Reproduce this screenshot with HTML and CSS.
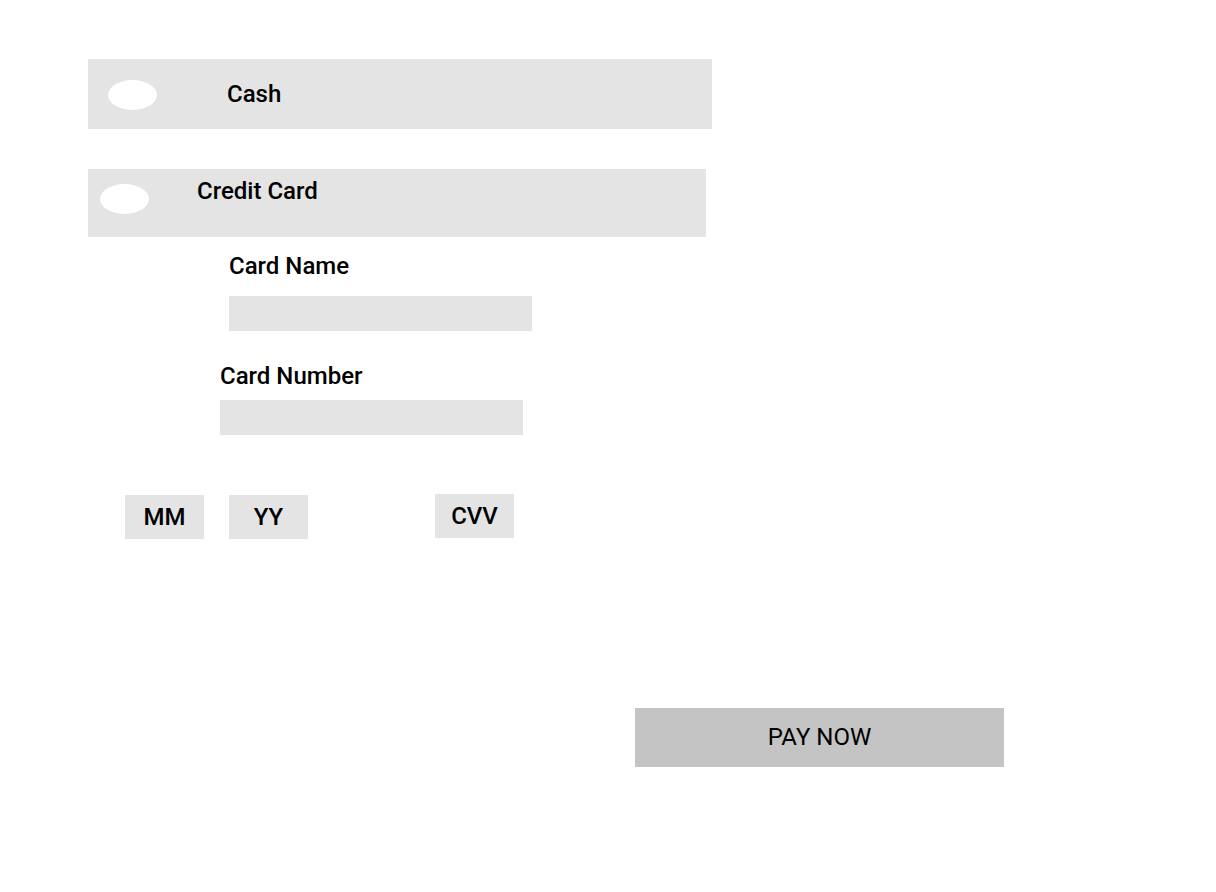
FILE: index.html
```html
<!DOCTYPE html>
<html lang="en">
<head>
<meta charset="utf-8">
<title>Payment</title>
<link rel="stylesheet" href="styles.css">
</head>
<body>
<main class="page">
  <div class="option option-cash">
    <span class="radio"></span>
    <span class="option-label">Cash</span>
  </div>
  <div class="option option-credit">
    <span class="radio"></span>
    <span class="option-label">Credit Card</span>
  </div>
  <div class="field field-name">
    <label class="field-label">Card Name</label>
    <div class="input"></div>
  </div>
  <div class="field field-number">
    <label class="field-label">Card Number</label>
    <div class="input"></div>
  </div>
  <div class="exp-row">
    <div class="small-box box-mm">MM</div>
    <div class="small-box box-yy">YY</div>
    <div class="small-box box-cvv">CVV</div>
  </div>
  <div class="pay-row">
    <button class="pay-btn">PAY NOW</button>
  </div>
</main>
</body>
</html>
```

FILE: styles.css
```css
* { box-sizing: border-box; }
html, body { margin: 0; padding: 0; background: #ffffff; }
body {
  font-family: Roboto, "Liberation Sans", Arial, sans-serif;
  font-size: 24px;
  font-weight: 500;
  color: #000;
}
.page {
  padding-top: 59px;
  width: 1216px;
  height: 892px;
}
.option {
  display: flex;
  background: #e4e4e4;
  margin-left: 88px;
}
.radio {
  display: block;
  width: 49px;
  height: 30px;
  border-radius: 50%;
  background: #ffffff;
  flex: none;
}
.option-label { line-height: 28px; }
.option-cash {
  width: 624px;
  height: 70px;
  align-items: center;
}
.option-cash .radio { margin-left: 20px; margin-top: 2px; }
.option-cash .option-label { margin-left: 70px; }
.option-credit {
  width: 618px;
  height: 68px;
  margin-top: 40px;
  align-items: flex-start;
}
.option-credit .radio { margin-left: 12px; margin-top: 15px; }
.option-credit .option-label { margin-left: 48px; margin-top: 8px; }

.field { display: flex; flex-direction: column; align-items: flex-start; }
.field-label { display: block; line-height: 28px; }
.input {
  width: 303px;
  height: 35px;
  background: #e4e4e4;
}
.field-name { margin-left: 229px; margin-top: 15px; }
.field-name .input { margin-top: 16px; }
.field-number { margin-left: 220px; margin-top: 31px; }
.field-number .input { margin-top: 10px; }

.exp-row {
  display: flex;
  align-items: flex-start;
  margin-top: 59px;
  margin-left: 125px;
}
.small-box {
  width: 79px;
  height: 44px;
  background: #e4e4e4;
  display: flex;
  align-items: center;
  justify-content: center;
  line-height: 28px;
}
.box-mm { margin-top: 1px; }
.box-yy { margin-left: 25px; margin-top: 1px; }
.box-cvv { margin-left: 127px; }

.pay-row { margin-top: 169px; margin-left: 635px; }
.pay-btn {
  display: flex;
  align-items: center;
  justify-content: center;
  width: 369px;
  height: 59px;
  border: none;
  padding: 0 0 2px 0;
  background: #c4c4c4;
  font-family: Roboto, "Liberation Sans", Arial, sans-serif;
  font-size: 24px;
  font-weight: 400;
  color: #000;
  line-height: 28px;
}
```
